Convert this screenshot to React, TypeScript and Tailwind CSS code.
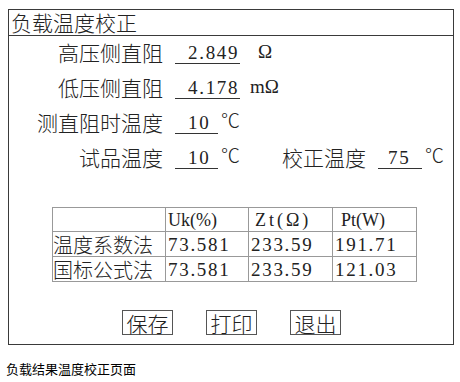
const cjk = "font-['Noto_Sans_CJK_SC',sans-serif]";
const num = "font-['Liberation_Serif','Noto_Sans_CJK_SC',serif] tracking-[1.7px]";
const serif = "font-['Liberation_Serif','Noto_Sans_CJK_SC',serif]";

function Field({ label, value, width, unit, unitGap = 'ml-[18px]' }: { label: string; value: string; width: string; unit: string; unitGap?: string }) {
  return (
    <div className="flex items-center h-[35px]">
      <span className="w-[154px] text-right">{label}</span>
      <span className={`ml-[12px] h-[22px] leading-[22px] border-b border-[#333] pl-[13px] ${width} ${num} text-[19px]`}>{value}</span>
      <span className={`${unitGap} ${serif} text-[19px]`}>{unit}</span>
    </div>
  );
}

const rows = [
  ['温度系数法', '73.581', '233.59', '191.71'],
  ['国标公式法', '73.581', '233.59', '121.03'],
];

export default function App() {
  return (
    <div className={`w-[460px] h-[382px] bg-white overflow-hidden text-[#222] ${cjk} font-light`}>
      <div className="mt-[9px] ml-[8px] w-[446px] h-[336px] border border-[#3a3a3a]">
        {/* Title */}
        <div className="h-[26px] border-b border-[#3a3a3a] pl-[2px] text-[21px] leading-[25px]">负载温度校正</div>

        {/* Fields */}
        <div className="text-[21px] -mt-[1px]">
          <Field label="高压侧直阻" value="2.849" width="w-[65px]" unit="Ω" />
          <Field label="低压侧直阻" value="4.178" width="w-[65px]" unit="mΩ" unitGap="ml-[10px]" />
          <Field label="测直阻时温度" value="10" width="w-[43px]" unit="℃" unitGap="ml-[3px]" />
          <div className="flex items-center h-[35px]">
            <span className="w-[154px] text-right">试品温度</span>
            <span className={`ml-[12px] h-[22px] leading-[22px] border-b border-[#333] pl-[13px] w-[43px] ${num} text-[19px]`}>10</span>
            <span className={`ml-[3px] ${serif} text-[19px]`}>℃</span>
            <span className="ml-[42px]">校正温度</span>
            <span className={`ml-[12px] h-[22px] leading-[22px] border-b border-[#333] pl-[10px] w-[44px] ${num} text-[19px]`}>75</span>
            <span className={`ml-[3px] ${serif} text-[19px]`}>℃</span>
          </div>
        </div>

        {/* Result table */}
        <table className="mt-[32px] ml-[43px] border-collapse table-fixed">
          <tbody>
            <tr className="h-[24px]">
              <td className="w-[113px] border border-[#999] p-0"></td>
              <td className={`w-[83px] border border-[#999] p-0 pl-[2px] ${serif} text-[18px] leading-[22px]`}>Uk(%)</td>
              <td className={`w-[84px] border border-[#999] p-0 pl-[6px] ${serif} text-[18px] leading-[22px] tracking-[3px]`}>Zt(Ω)</td>
              <td className={`w-[84px] border border-[#999] p-0 pl-[8px] ${serif} text-[18px] leading-[22px]`}>Pt(W)</td>
            </tr>
            {rows.map((r) => (
              <tr key={r[0]} className="h-[25px]">
                <td className="border border-[#999] p-0 text-[20px] leading-[23px] whitespace-nowrap">{r[0]}</td>
                {r.slice(1).map((v, i) => (
                  <td key={i} className={`border border-[#999] p-0 pl-[2px] ${num} text-[19px] leading-[23px]`}>{v}</td>
                ))}
              </tr>
            ))}
          </tbody>
        </table>

        {/* Buttons */}
        <div className="mt-[28px] ml-[113px] flex gap-[33px]">
          {['保存', '打印', '退出'].map((b) => (
            <button key={b} className="w-[51px] h-[25px] border border-[#555] text-[21px] leading-[22px] flex items-center justify-center">
              {b}
            </button>
          ))}
        </div>
      </div>

      <div className="mt-[16px] ml-[6px] h-[16px] leading-[16px] text-[13px] text-black font-normal">负载结果温度校正页面</div>
    </div>
  );
}
